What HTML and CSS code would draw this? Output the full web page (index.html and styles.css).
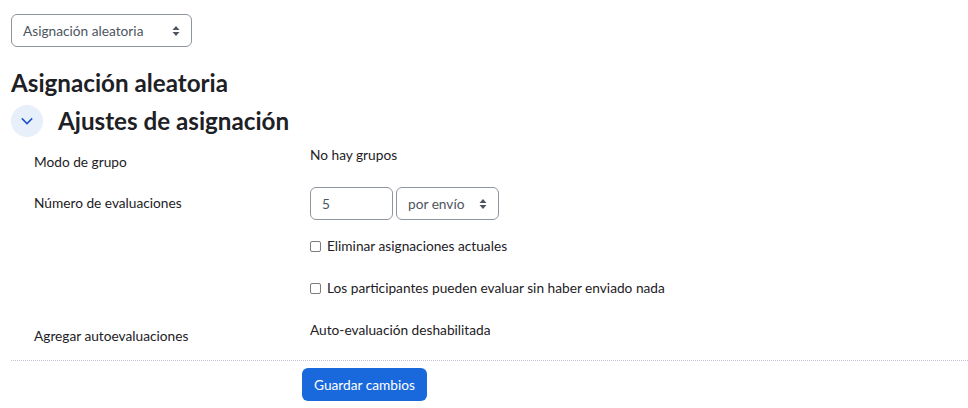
FILE: index.html
```html
<!DOCTYPE html>
<html lang="es">
<head>
    <meta charset="UTF-8">
    <title>Asignación aleatoria</title>
    <link rel="stylesheet" href="styles.css">
</head>
<body>

<select class="custom-select method-select">
    <option>Asignación aleatoria</option>
</select>

<h2 class="page-title">Asignación aleatoria</h2>

<div class="section-head">
    <span class="collapse-btn">
        <svg width="12" height="12" viewBox="0 0 12 12"><path d="M.8 3.4 6 8.6l5.2-5.2" fill="none" stroke="#1a52c4" stroke-width="1.5"/></svg>
    </span>
    <h3>Ajustes de asignación</h3>
</div>

<form class="settings">
    <div class="row row-group">
        <div class="row-label">Modo de grupo</div>
        <div class="row-value">No hay grupos</div>
    </div>
    <div class="row row-count">
        <div class="row-label">Número de evaluaciones</div>
        <div class="row-value inline">
            <input type="text" class="count-input" value="5">
            <select class="custom-select per-select">
                <option>por envío</option>
            </select>
        </div>
    </div>
    <div class="row row-check">
        <div class="row-label"></div>
        <label class="row-value check"><input type="checkbox"> Eliminar asignaciones actuales</label>
    </div>
    <div class="row row-check">
        <div class="row-label"></div>
        <label class="row-value check"><input type="checkbox"> Los participantes pueden evaluar sin haber enviado nada</label>
    </div>
    <div class="row row-self">
        <div class="row-label">Agregar autoevaluaciones</div>
        <div class="row-value">Auto-evaluación deshabilitada</div>
    </div>
    <div class="actions">
        <button type="submit" class="save-btn">Guardar cambios</button>
    </div>
</form>

</body>
</html>
```

FILE: styles.css
```css
body {
    margin: 0;
    padding: 14px 0 0 11px;
    font-family: Lato, "Open Sans", sans-serif;
    font-size: 13.7px;
    line-height: 20px;
    color: #1d2125;
    background-color: #fff;
    overflow: hidden;
}
.custom-select {
    display: block;
    height: 33px;
    padding: 0 30px 0 11px;
    font: inherit;
    color: #4d5560;
    background-color: #fff;
    background-image: url("data:image/svg+xml,%3Csvg xmlns='http://www.w3.org/2000/svg' width='8' height='10' viewBox='0 0 8 10'%3E%3Cpath fill='%234d5560' d='M4 0 7.5 4h-7zM4 10 .5 6h7z'/%3E%3C/svg%3E");
    background-repeat: no-repeat;
    background-position: right 11px center;
    border: 1px solid #8f959e;
    border-radius: 6px;
    appearance: none;
}
.method-select {
    width: 181px;
}
.per-select {
    width: 103px;
    margin-left: 3px;
}
.page-title {
    margin: 22px 0 0;
    font-size: 24.2px;
    line-height: 28px;
    font-weight: 700;
}
.section-head {
    display: flex;
    align-items: center;
    margin-top: 8px;
}
.section-head h3 {
    margin: 0 0 0 15px;
    font-size: 24.2px;
    line-height: 32px;
    font-weight: 700;
}
.collapse-btn {
    display: flex;
    align-items: center;
    justify-content: center;
    width: 32px;
    height: 32px;
    border-radius: 50%;
    background-color: #e7effa;
}
.row {
    display: flex;
    padding-left: 23px;
}
.row-label {
    width: 276px;
}
.row-group {
    margin-top: 8px;
}
.row-group .row-label {
    padding-top: 7px;
}
.row-count {
    margin-top: 15px;
}
.row-count .row-label {
    padding-top: 6px;
}
.inline {
    display: flex;
}
.count-input {
    box-sizing: border-box;
    width: 83px;
    height: 33px;
    padding: 0 11px;
    font: inherit;
    color: #4d5560;
    border: 1px solid #8f959e;
    border-radius: 6px;
}
.row-check {
    margin-top: 16px;
}
.row-check + .row-check {
    margin-top: 22px;
}
.check {
    display: flex;
    align-items: center;
    gap: 6px;
}
.check input {
    box-sizing: border-box;
    width: 11px;
    height: 11px;
    margin: 0;
    background-color: #fff;
    border: 1px solid #7d7d7d;
    border-radius: 2px;
    appearance: none;
}
.row-self {
    margin-top: 22px;
}
.row-self .row-label {
    padding-top: 6px;
}
.actions {
    margin-top: 14px;
    padding: 7px 0 0 291px;
    border-top: 1px dotted #c3c4da;
}
.save-btn {
    width: 125px;
    height: 33px;
    padding: 0;
    font: inherit;
    color: #fff;
    background-color: #1a69dc;
    border: none;
    border-radius: 6px;
}
```
